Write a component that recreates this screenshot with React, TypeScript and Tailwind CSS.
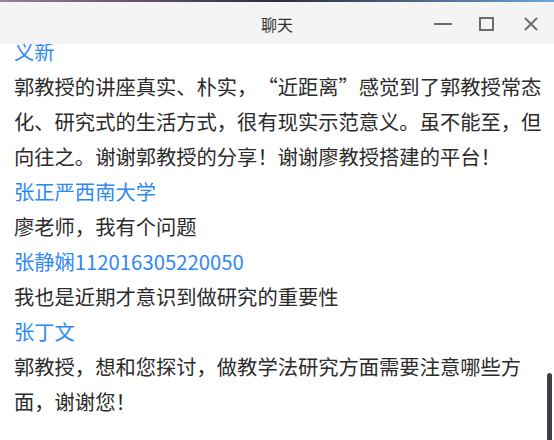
import React from 'react';

type Msg = { name: string; text: string };

const messages: Msg[] = [
  {
    name: '义新',
    text: '郭教授的讲座真实、朴实，“近距离”感觉到了郭教授常态化、研究式的生活方式，很有现实示范意义。虽不能至，但向往之。谢谢郭教授的分享！谢谢廖教授搭建的平台！',
  },
  { name: '张正严西南大学', text: '廖老师，我有个问题' },
  { name: '张静娴112016305220050', text: '我也是近期才意识到做研究的重要性' },
  { name: '张丁文', text: '郭教授，想和您探讨，做教学法研究方面需要注意哪些方面，谢谢您！' },
];

function TitleBar() {
  return (
    <div className="relative h-[42px] bg-[#f4f4f4] flex items-center justify-center">
      <span className="text-[16px] text-[#333] pt-[2px]">聊天</span>
      <div className="absolute right-0 top-0 h-full flex items-center">
        <svg width="18" height="4" viewBox="0 0 18 4" className="mr-[27px] mt-[2px]">
          <rect x="0" y="1" width="18" height="2" fill="#6b6b6b" />
        </svg>
        <svg width="16" height="15" viewBox="0 0 16 15" className="mr-[29px] mt-[2px]">
          <rect x="1" y="1" width="13" height="12" fill="none" stroke="#6b6b6b" strokeWidth="2" />
        </svg>
        <svg width="14" height="14" viewBox="0 0 14 14" className="mr-[16px] mt-[2px]">
          <path d="M1 1 L13 13 M13 1 L1 13" stroke="#6b6b6b" strokeWidth="1.8" />
        </svg>
      </div>
    </div>
  );
}

export default function App() {
  return (
    <div
      className="w-[554px] h-[440px] overflow-hidden bg-white flex flex-col"
      style={{ fontFamily: '"Noto Sans CJK SC", "Noto Sans", sans-serif' }}
    >
      <div className="h-[2px] bg-gradient-to-r from-[#9a7f95] via-[#2e2c3a] to-[#6aa6dc]" />
      <TitleBar />
      {/* chat list, scrolled so the first name is half hidden under the title bar */}
      <div className="relative flex-1 overflow-hidden">
        {/* keep full-width punctuation untrimmed, like the source font */}
        <div className="-mt-[10px] pl-[14px] w-[548px] text-[20.3px] leading-[35px] [text-spacing-trim:space-all]">
          {messages.map((m, i) => (
            <div key={i}>
              <div className="text-[#2f88f2]">{m.name}</div>
              <div className="text-[#2b2b2b]">{m.text}</div>
            </div>
          ))}
        </div>
        <div className="absolute right-[2px] top-[329px] w-[5px] h-[80px] rounded-t-[3px] bg-[#3d3f49]" />
      </div>
    </div>
  );
}
